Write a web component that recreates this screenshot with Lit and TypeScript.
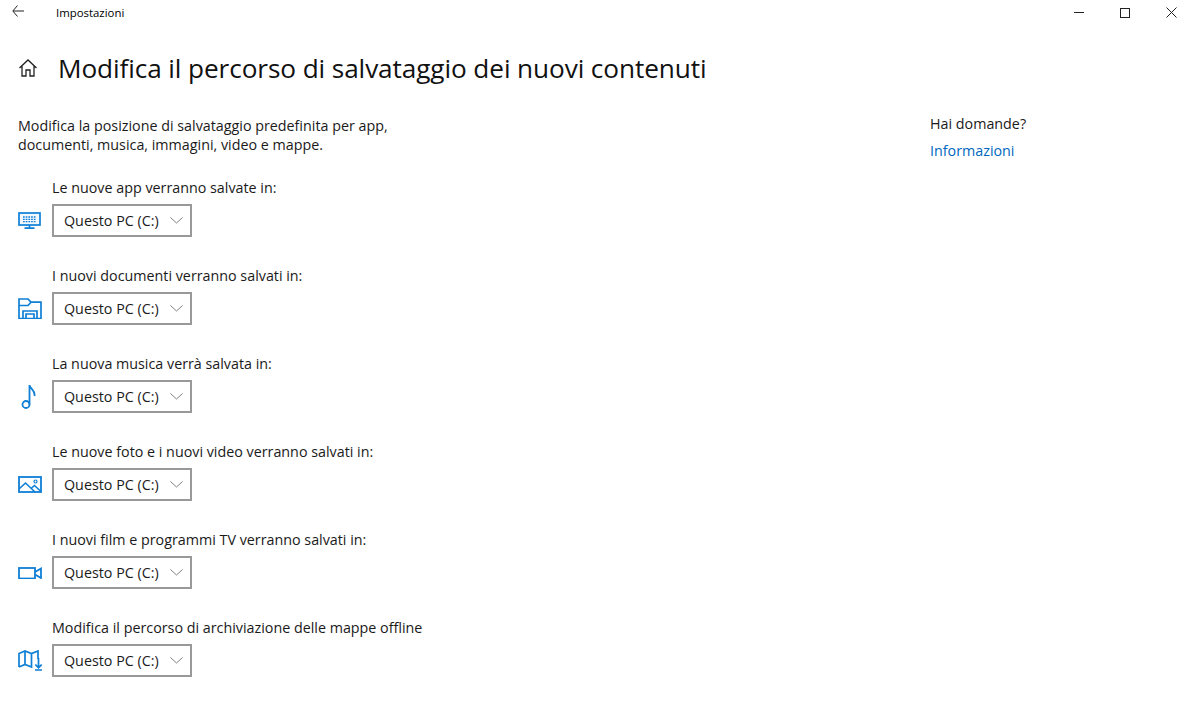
import { LitElement, html, css, svg } from "lit";
import { customElement } from "lit/decorators.js";

const icons = {
  pc: svg`<rect x="1" y="1" width="21" height="12" fill="#cfe6f7" fill-opacity=".3" stroke="#0f7fd6" stroke-width="1.7"/><path d="M6.500 16.200h10M11.500 13v3" stroke="#0f7fd6" stroke-width="1.700"/><path d="M5 5h13M5 7.300h13M5 9.600h13" stroke="#0f7fd6" stroke-width="1.300" stroke-dasharray="1.700 1"/>`,
  folder: svg`<path d="M3 20.500H1V1h9l3 3.200h10v16.300h-2M1 7.500h9l3-3.300" fill="none" stroke="#0f7fd6" stroke-width="1.700"/><path d="M5 20.500v-7.500h14v7.500M8 20.500v-4.500h8v4.500M3 20.500h18" fill="none" stroke="#0f7fd6" stroke-width="1.700"/>`,
  music: svg`<circle cx="8" cy="19.500" r="3.500" fill="none" stroke="#0f7fd6" stroke-width="1.800"/><path d="M11.500 19.500V0c.4 3.800 6 5 5 11" fill="none" stroke="#0f7fd6" stroke-width="1.800"/>`,
  photo: svg`<rect x="1" y="1" width="22" height="15" fill="none" stroke="#0f7fd6" stroke-width="1.800"/><path d="M1 13l6.500-6 9.500 9M13 12.500l3.500-3 6.500 6" fill="none" stroke="#0f7fd6" stroke-width="1.600"/><circle cx="17.500" cy="5.500" r="1.500" fill="none" stroke="#0f7fd6" stroke-width="1.200"/>`,
  video: svg`<rect x="1" y="1" width="16" height="10.500" fill="none" stroke="#0f7fd6" stroke-width="1.800"/><path d="M17 5l6-3.500v9.500l-6-3.500" fill="none" stroke="#0f7fd6" stroke-width="1.800"/>`,
  map: svg`<path d="M1 17V3.500L7 1l6.500 2.500L20 1v8M1 17l6-2.500 6.500 2.500V3.500M7 1v13.500" fill="none" stroke="#0f7fd6" stroke-width="1.700"/><path d="M20.500 8v9.500M17.300 14.500l3.200 3.200 3.200-3.200M17 20h7" fill="none" stroke="#0f7fd6" stroke-width="1.700"/>`,
};

const rows = [
  ["Le nuove app verranno salvate in:", "pc", 23, 17],
  ["I nuovi documenti verranno salvati in:", "folder", 24, 21],
  ["La nuova musica verrà salvata in:", "music", 24, 24],
  ["Le nuove foto e i nuovi video verranno salvati in:", "photo", 24, 17],
  ["I nuovi film e programmi TV verranno salvati in:", "video", 24, 12],
  ["Modifica il percorso di archiviazione delle mappe offline", "map", 24, 21],
] as const;

@customElement("app-root")
export class AppRoot extends LitElement {
  static styles = css`
    :host { display: block; width: 1188px; height: 709px; overflow: hidden; background: #fff; color: #1a1a1a;
      font-family: "Open Sans", "Noto Sans", sans-serif; font-size: 14.3px; }
    .titlebar { height: 26px; display: flex; align-items: center; color: #000; }
    .back { width: 12px; margin-left: 12px; display: flex; margin-top: -4px; }
    .app { margin-left: 32px; font-size: 11.4px; margin-top: -1px; }
    .winbtns { margin-left: auto; margin-right: -6px; display: flex; }
    .winbtn { width: 46px; height: 26px; display: flex; align-items: center; justify-content: center; margin-top: -1px; }
    .head { display: flex; align-items: center; height: 40px; margin-top: 22px; }
    .home { width: 20px; margin-left: 18px; display: flex; }
    h1 { margin: 0 0 0 20px; font-size: 26.2px; font-weight: 400; line-height: 40px; color: #111; white-space: nowrap; letter-spacing: -0.1px; }
    .body { display: flex; margin-top: 23px; padding-left: 18px; }
    .main { width: 912px; }
    .desc { margin: 5px 0 0; line-height: 19px; height: 38px; }
    .row { height: 88px; }
    .rows { margin-top: 25px; }
    .label { padding-left: 34px; line-height: 18px; height: 25px; white-space: nowrap; }
    .ctl { display: flex; align-items: center; }
    .ico { width: 34px; height: 33px; display: flex; align-items: center; }
    .select { box-sizing: border-box; width: 140px; height: 33px; border: 2px solid #999; display: flex; align-items: center; padding: 0 7px 0 10px; justify-content: space-between; }
    .side { line-height: 20px; }
    .side .q { margin-top: 3px; }
    .side .link { margin-top: 7px; color: #0067c0; }
  `;

  render() {
    return html`
      <div class="titlebar">
        <span class="back"><svg width="12" height="12" viewBox="0 0 12 12"><path d="M5.500.5L.8 6l4.700 5.500M1 6h11" fill="none" stroke="#222" stroke-width="1"/></svg></span>
        <span class="app">Impostazioni</span>
        <div class="winbtns">
          <span class="winbtn"><svg width="10" height="2"><path d="M0 .5h10" stroke="#222"/></svg></span>
          <span class="winbtn"><svg width="10" height="10"><rect x=".5" y=".5" width="9" height="9" fill="none" stroke="#222"/></svg></span>
          <span class="winbtn"><svg width="11" height="11"><path d="M.5.500l10 10M10.500.500l-10 10" stroke="#222"/></svg></span>
        </div>
      </div>
      <div class="head">
        <span class="home"><svg width="20" height="20" viewBox="0 0 20 20"><path d="M1.500 10L10 2l8.500 8M4 8v10h4v-6h4v6h4V8" fill="none" stroke="#222" stroke-width="1.300"/></svg></span>
        <h1>Modifica il percorso di salvataggio dei nuovi contenuti</h1>
      </div>
      <div class="body">
        <div class="main">
          <p class="desc">Modifica la posizione di salvataggio predefinita per app,<br />documenti, musica, immagini, video e mappe.</p>
          <div class="rows">
            ${rows.map(([label, icon, w, h]) => html`
              <div class="row">
                <div class="label">${label}</div>
                <div class="ctl">
                  <span class="ico"><svg width=${w} height=${h} viewBox="0 0 ${w} ${h}">${icons[icon]}</svg></span>
                  <div class="select"><span>Questo PC (C:)</span>
                    <svg width="13" height="7" viewBox="0 0 13 7"><path d="M.5.500L6.500 6l6-5.500" fill="none" stroke="#808080" stroke-width="1"/></svg>
                  </div>
                </div>
              </div>`)}
          </div>
        </div>
        <div class="side">
          <div class="q">Hai domande?</div>
          <div class="link">Informazioni</div>
        </div>
      </div>
    `;
  }
}
